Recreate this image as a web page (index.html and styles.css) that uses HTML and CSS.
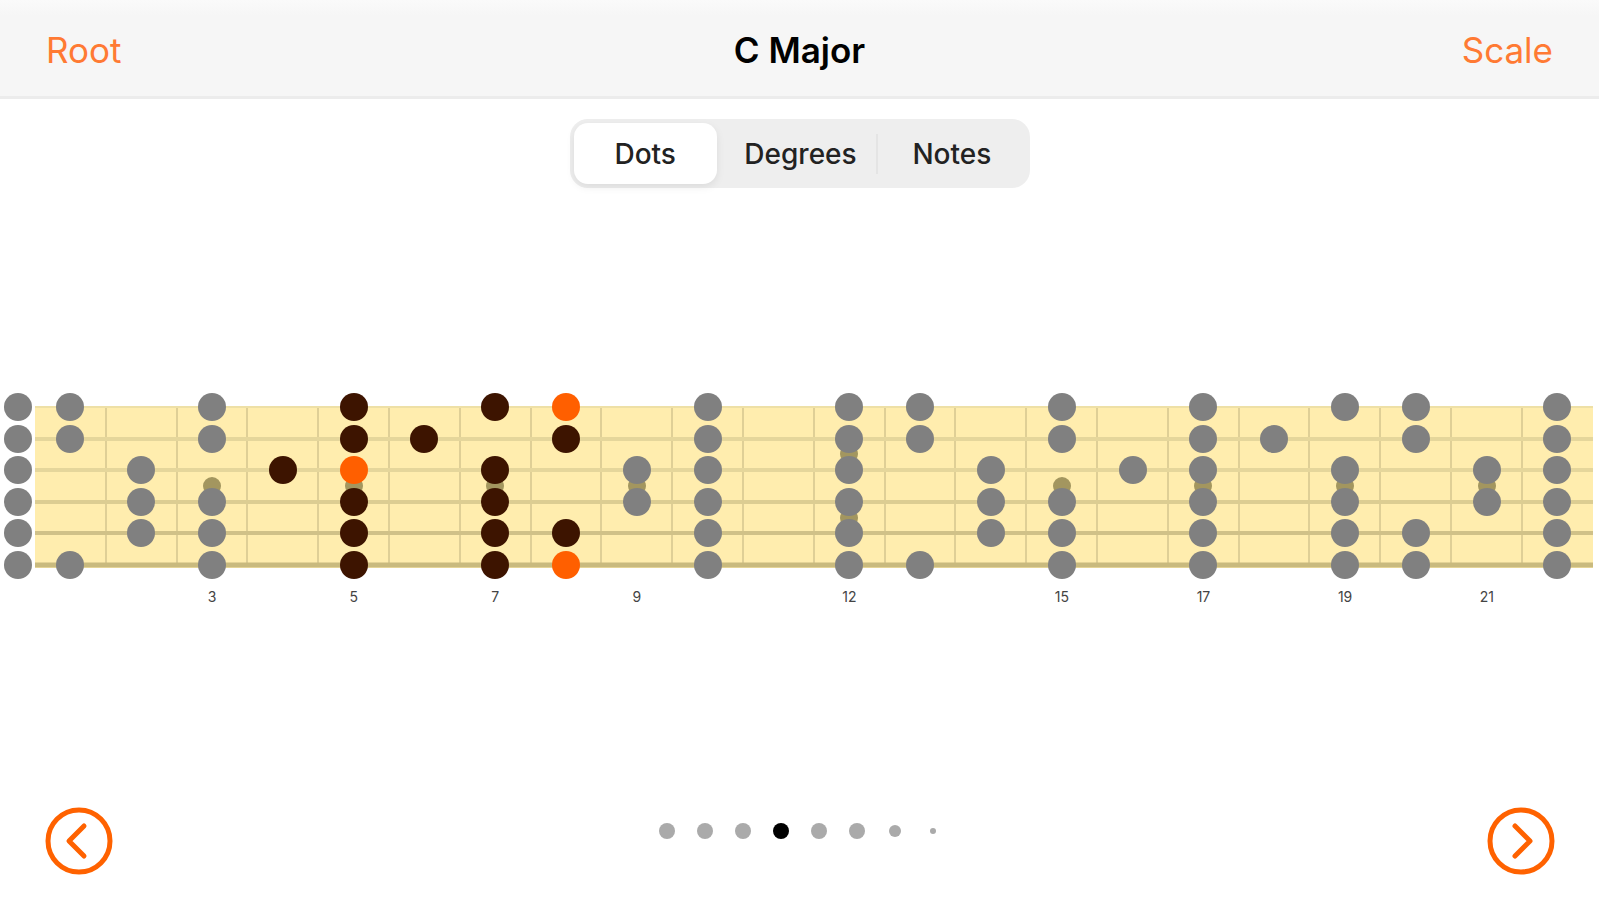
FILE: index.html
```html
<!DOCTYPE html>
<html lang="en">
<head>
    <meta charset="UTF-8">
    <meta name="viewport" content="width=device-width, initial-scale=1.0">
    <title>C Major</title>
    <link rel="stylesheet" href="styles.css">
</head>
<body>
    <header class="navbar">
        <button class="nav-btn" type="button">Root</button>
        <h1>C Major</h1>
        <button class="nav-btn nav-right" type="button">Scale</button>
    </header>

    <div class="segmented" role="radiogroup" aria-label="Display">
        <input type="radio" name="display" id="dots" checked>
        <label for="dots">Dots</label>
        <input type="radio" name="display" id="degrees">
        <label for="degrees">Degrees</label>
        <input type="radio" name="display" id="notes">
        <label for="notes" class="divided">Notes</label>
    </div>

    <main class="neck">
        <svg class="fretboard" viewBox="0 0 1599 190" role="img" aria-label="Fretboard">
            <defs>
                <circle id="dot" r="14"/>
                <circle id="inlay" r="9"/>
            </defs>

            <rect class="wood" x="35" y="15" width="1558" height="162"/>

            <!-- frets -->
            <path class="fret" d="M106 16V174M177 16V174M247 16V174M318 16V174M389 16V174M460 16V174M531 16V174M601 16V174M672 16V174M743 16V174M814 16V174M885 16V174M955 16V174M1026 16V174M1097 16V174M1168 16V174M1239 16V174M1309 16V174M1380 16V174M1451 16V174M1522 16V174"/>

            <!-- strings, thin to thick -->
            <path class="string s1" d="M35 16H1593"/>
            <path class="string s2" d="M35 48H1593"/>
            <path class="string s3" d="M35 79H1593"/>
            <path class="string s4" d="M35 111H1593"/>
            <path class="string s5" d="M35 142H1593"/>
            <path class="string s6" d="M35 174H1593"/>

            <g class="inlays">
                <use href="#inlay" x="212" y="95"/>
                <use href="#inlay" x="354" y="95"/>
                <use href="#inlay" x="495" y="95"/>
                <use href="#inlay" x="637" y="95"/>
                <use href="#inlay" x="849" y="63"/>
                <use href="#inlay" x="849" y="127"/>
                <use href="#inlay" x="1062" y="95"/>
                <use href="#inlay" x="1203" y="95"/>
                <use href="#inlay" x="1345" y="95"/>
                <use href="#inlay" x="1487" y="95"/>
            </g>

            <g class="note" transform="translate(0 16)">
                <use href="#dot" x="18"/>
                <use href="#dot" x="70"/>
                <use href="#dot" x="212"/>
                <use href="#dot" x="354" class="active"/>
                <use href="#dot" x="495" class="active"/>
                <use href="#dot" x="566" class="root"/>
                <use href="#dot" x="708"/>
                <use href="#dot" x="849"/>
                <use href="#dot" x="920"/>
                <use href="#dot" x="1062"/>
                <use href="#dot" x="1203"/>
                <use href="#dot" x="1345"/>
                <use href="#dot" x="1416"/>
                <use href="#dot" x="1557"/>
            </g>
            <g class="note" transform="translate(0 48)">
                <use href="#dot" x="18"/>
                <use href="#dot" x="70"/>
                <use href="#dot" x="212"/>
                <use href="#dot" x="354" class="active"/>
                <use href="#dot" x="424" class="active"/>
                <use href="#dot" x="566" class="active"/>
                <use href="#dot" x="708"/>
                <use href="#dot" x="849"/>
                <use href="#dot" x="920"/>
                <use href="#dot" x="1062"/>
                <use href="#dot" x="1203"/>
                <use href="#dot" x="1274"/>
                <use href="#dot" x="1416"/>
                <use href="#dot" x="1557"/>
            </g>
            <g class="note" transform="translate(0 79)">
                <use href="#dot" x="18"/>
                <use href="#dot" x="141"/>
                <use href="#dot" x="283" class="active"/>
                <use href="#dot" x="354" class="root"/>
                <use href="#dot" x="495" class="active"/>
                <use href="#dot" x="637"/>
                <use href="#dot" x="708"/>
                <use href="#dot" x="849"/>
                <use href="#dot" x="991"/>
                <use href="#dot" x="1133"/>
                <use href="#dot" x="1203"/>
                <use href="#dot" x="1345"/>
                <use href="#dot" x="1487"/>
                <use href="#dot" x="1557"/>
            </g>
            <g class="note" transform="translate(0 111)">
                <use href="#dot" x="18"/>
                <use href="#dot" x="141"/>
                <use href="#dot" x="212"/>
                <use href="#dot" x="354" class="active"/>
                <use href="#dot" x="495" class="active"/>
                <use href="#dot" x="637"/>
                <use href="#dot" x="708"/>
                <use href="#dot" x="849"/>
                <use href="#dot" x="991"/>
                <use href="#dot" x="1062"/>
                <use href="#dot" x="1203"/>
                <use href="#dot" x="1345"/>
                <use href="#dot" x="1487"/>
                <use href="#dot" x="1557"/>
            </g>
            <g class="note" transform="translate(0 142)">
                <use href="#dot" x="18"/>
                <use href="#dot" x="141"/>
                <use href="#dot" x="212"/>
                <use href="#dot" x="354" class="active"/>
                <use href="#dot" x="495" class="active"/>
                <use href="#dot" x="566" class="active"/>
                <use href="#dot" x="708"/>
                <use href="#dot" x="849"/>
                <use href="#dot" x="991"/>
                <use href="#dot" x="1062"/>
                <use href="#dot" x="1203"/>
                <use href="#dot" x="1345"/>
                <use href="#dot" x="1416"/>
                <use href="#dot" x="1557"/>
            </g>
            <g class="note" transform="translate(0 174)">
                <use href="#dot" x="18"/>
                <use href="#dot" x="70"/>
                <use href="#dot" x="212"/>
                <use href="#dot" x="354" class="active"/>
                <use href="#dot" x="495" class="active"/>
                <use href="#dot" x="566" class="root"/>
                <use href="#dot" x="708"/>
                <use href="#dot" x="849"/>
                <use href="#dot" x="920"/>
                <use href="#dot" x="1062"/>
                <use href="#dot" x="1203"/>
                <use href="#dot" x="1345"/>
                <use href="#dot" x="1416"/>
                <use href="#dot" x="1557"/>
            </g>
        </svg>

        <div class="fret-numbers">
            <span></span><span></span><span>3</span><span></span><span>5</span><span></span>
            <span>7</span><span></span><span>9</span><span></span><span></span><span>12</span>
            <span></span><span></span><span>15</span><span></span><span>17</span><span></span>
            <span>19</span><span></span><span>21</span><span></span>
        </div>
    </main>

    <footer class="pager">
        <button class="arrow-btn" type="button" aria-label="Previous position">
            <svg viewBox="0 0 68 68">
                <circle cx="34" cy="34" r="31"/>
                <path d="M39 19L24 34L39 49"/>
            </svg>
        </button>
        <div class="pages">
            <span class="page"></span>
            <span class="page"></span>
            <span class="page"></span>
            <span class="page current"></span>
            <span class="page"></span>
            <span class="page"></span>
            <span class="page small"></span>
            <span class="page tiny"></span>
        </div>
        <button class="arrow-btn" type="button" aria-label="Next position">
            <svg viewBox="0 0 68 68">
                <circle cx="34" cy="34" r="31"/>
                <path d="M28 19L43 34L28 49"/>
            </svg>
        </button>
    </footer>
</body>
</html>
```

FILE: styles.css
```css
* {
    box-sizing: border-box;
}

body {
    margin: 0;
    min-height: 100vh;
    display: flex;
    flex-direction: column;
    align-items: center;
    background: #fff;
    color: #000;
    font-family: 'Inter', 'Liberation Sans', sans-serif;
}

button {
    padding: 0;
    border: none;
    background: none;
    font-family: inherit;
    cursor: pointer;
}

.navbar {
    width: 100%;
    display: grid;
    grid-template-columns: 1fr auto 1fr;
    align-items: center;
    padding: 29px 46px 25px;
    background: linear-gradient(#fafafa 0, #f6f6f6 16px);
    border-bottom: 3px solid #ececec;
}

.navbar h1 {
    margin: 0;
    font-size: 35px;
    font-weight: 600;
    line-height: 42px;
}

.nav-btn {
    justify-self: start;
    color: #ff7a33;
    font-size: 35px;
    line-height: 42px;
}

.nav-right {
    justify-self: end;
}

.segmented {
    width: 460px;
    max-width: 100%;
    display: grid;
    grid-template-columns: 1fr 1fr 1fr;
    margin-top: 20px;
    padding: 4px 2px 4px 4px;
    border-radius: 18px;
    background: #eee;
}

.segmented input {
    position: absolute;
    opacity: 0;
}

.segmented label {
    display: flex;
    align-items: center;
    justify-content: center;
    height: 61px;
    border-radius: 14px;
    color: #222;
    font-size: 28px;
    font-weight: 500;
    cursor: pointer;
}

.segmented .divided {
    border-radius: 0;
    background: linear-gradient(#e4e4e4, #e4e4e4) left center / 2px 40px no-repeat;
}

.segmented input:checked + label {
    margin-right: 8px;
    background: #fff;
    box-shadow: 0 3px 8px rgba(0,0,0,0.08);
}

.neck {
    width: 100%;
    flex: 1;
    display: flex;
    flex-direction: column;
    justify-content: center;
}

.fretboard {
    display: block;
    width: 100%;
}

.wood {
    fill: #ffedae;
}

.fret {
    stroke: #dfcf96;
    stroke-width: 2;
}

.string {
    stroke-width: 4;
    stroke: #e5d69b;
}

.s1 {
    stroke: #eee0a6;
    stroke-width: 2;
}

.s4 {
    stroke: #dccd92;
}

.s5 {
    stroke: #d0c188;
}

.s6 {
    stroke: #c9ba7e;
    stroke-width: 5;
}

.inlays {
    fill: #a3965f;
}

.note {
    fill: #808080;
}

.active {
    fill: #3d1400;
}

.root {
    fill: #ff5f00;
}

.fret-numbers {
    display: grid;
    grid-template-columns: repeat(22, 1fr);
    margin-top: 8px;
    padding: 0 6px 0 35px;
    color: #444;
    font-size: 14px;
    line-height: 16px;
    text-align: center;
}

.pager {
    width: 100%;
    display: flex;
    justify-content: space-between;
    padding: 0 44px 25px 45px;
}

.arrow-btn {
    width: 68px;
    height: 68px;
}

.arrow-btn svg {
    display: block;
    fill: none;
    stroke: #ff6200;
    stroke-width: 5;
    stroke-linecap: round;
    stroke-linejoin: round;
}

.pages {
    height: 48px;
    display: grid;
    grid-template-columns: repeat(8, 38px);
    align-items: center;
    justify-items: center;
}

.page {
    width: 16px;
    height: 16px;
    border-radius: 50%;
    background: #aaa;
}

.current {
    background: #000;
}

.small {
    width: 12px;
    height: 12px;
}

.tiny {
    width: 6px;
    height: 6px;
}
```
